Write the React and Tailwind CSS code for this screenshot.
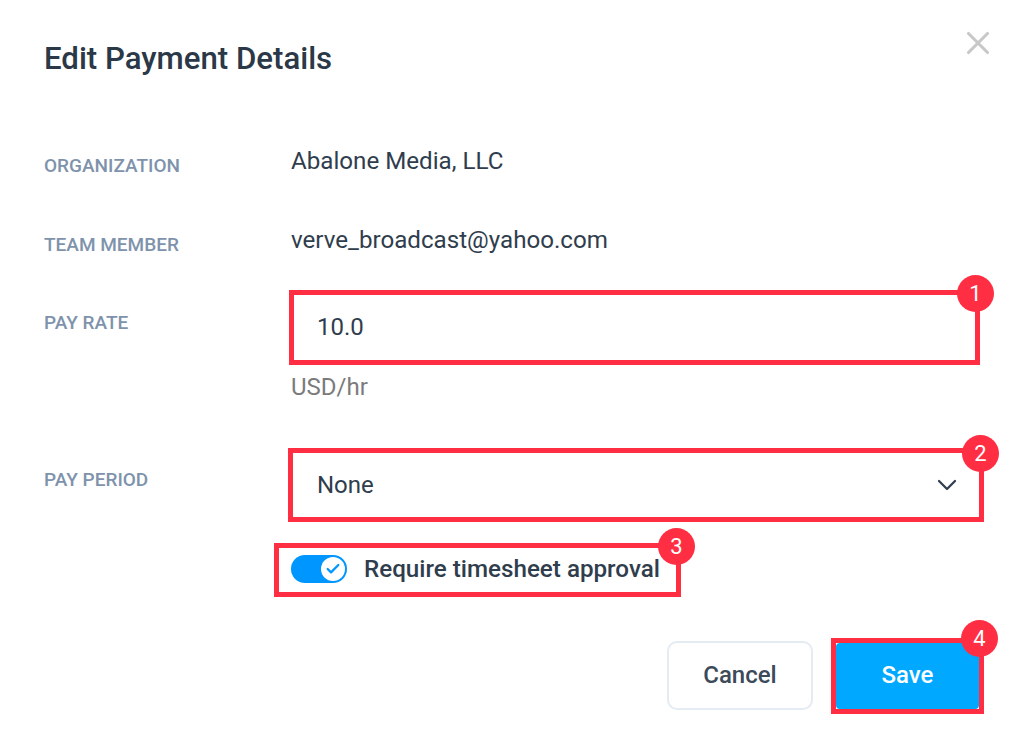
import React from 'react';
import { X, ChevronDown, Check } from 'lucide-react';

function Badge({ n, className }) {
  return (
    <span className={`absolute flex h-[37px] w-[37px] items-center justify-center rounded-full bg-[#ff2e43] text-[22px] text-white ${className}`}>
      {n}
    </span>
  );
}

function Label({ children, className }) {
  return <div className={`w-[247px] shrink-0 text-[19px] leading-[24px] font-medium text-[#7e93ab] ${className}`}>{children}</div>;
}

export default function App() {
  return (
    <div className="flex h-[750px] w-[1024px] flex-col bg-white pl-[44px] font-['Roboto',sans-serif] text-[#2f3d4d]">
      {/* Header */}
      <div className="flex h-[120px] items-start justify-between pt-[37px] pr-[27px]">
        <h2 className="text-[31.2px] leading-[44px] font-medium text-[#2a3847]">Edit Payment Details</h2>
        <X size={38} strokeWidth={2} className="-mt-[13px] text-[#c8c8c8]" />
      </div>

      {/* Read only rows */}
      <div className="flex h-[107px] items-start pt-[26px]">
        <Label className="mt-[8px]">ORGANIZATION</Label>
        <span className="text-[24.15px] leading-[30px]">Abalone Media, LLC</span>
      </div>
      <div className="flex h-[60px] items-start">
        <Label className="mt-[6px]">TEAM MEMBER</Label>
        <span className="-mt-[2px] text-[24.15px] leading-[30px]">verve_broadcast@yahoo.com</span>
      </div>

      {/* Pay rate */}
      <div className="mt-[3px] flex items-start">
        <Label className="mt-[21px]">PAY RATE</Label>
        <div className="-ml-[2px]">
          <div className="relative flex h-[75px] w-[691px] items-center border-[5px] border-[#ff2e43] pl-[23px] text-[24px]">
            <span className="-mt-[2px]">10.0</span>
            <Badge n="1" className="-top-[20px] -right-[19px]" />
          </div>
          <div className="mt-[8px] ml-[2px] text-[24px] leading-[28px] text-[#7b7b7b]">USD/hr</div>
        </div>
      </div>

      {/* Pay period */}
      <div className="mt-[47px] flex items-start">
        <Label className="mt-[20px]">PAY PERIOD</Label>
        <div className="relative -ml-[3px] flex h-[74px] w-[696px] items-center justify-between border-[5px] border-[#ff2e43] pr-[16px] pl-[24px] text-[24px]">
          None
          <ChevronDown size={32} strokeWidth={1.7} className="-mt-[1px] text-[#2f3d4d]" />
          <Badge n="2" className="-top-[18px] -right-[20px]" />
        </div>
      </div>

      {/* Approval toggle */}
      <div className="mt-[21px] ml-[230px] self-start">
        <div className="relative flex h-[54px] w-[407px] items-center gap-[17px] border-[5px] border-[#ff2e43] pb-[2px] pl-[12px]">
          <span className="flex h-[28px] w-[56px] items-center justify-end rounded-full bg-[#0096ff] pr-[2px]">
            <span className="flex h-[24px] w-[24px] items-center justify-center rounded-full bg-white">
              <Check size={16} strokeWidth={3.4} className="text-[#0096ff]" />
            </span>
          </span>
          <span className="text-[24.2px] leading-[28px] font-medium whitespace-nowrap">Require timesheet approval</span>
          <Badge n="3" className="-top-[20px] -right-[19px]" />
        </div>
      </div>

      {/* Actions */}
      <div className="mt-[41px] flex items-center justify-end gap-[18px] pr-[40px]">
        <button className="-mt-[1px] h-[69px] w-[146px] rounded-[10px] border-2 border-[#e5ebf2] pb-[2px] text-[24px] font-medium text-[#3c4a5a]">Cancel</button>
        <div className="relative border-[5px] border-[#ff2e43]">
          <button className="flex h-[66px] w-[143px] items-center justify-center rounded-[4px] bg-[#00a8ff] pb-[2px] text-[24px] font-medium text-white">Save</button>
          <Badge n="4" className="-top-[23px] -right-[19px]" />
        </div>
      </div>
    </div>
  );
}
